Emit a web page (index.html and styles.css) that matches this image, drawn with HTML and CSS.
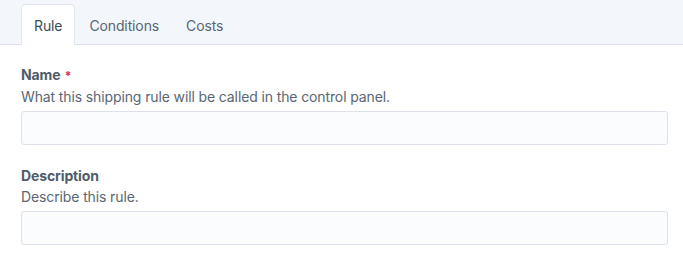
FILE: index.html
```html
<!DOCTYPE html>
<html>
<head>
<meta charset="utf-8">
<link rel="stylesheet" href="styles.css">
</head>
<body>
<div class="tabs">
  <div class="tab active">Rule</div>
  <div class="tab">Conditions</div>
  <div class="tab">Costs</div>
</div>
<div class="content">
  <div class="field">
    <div class="label">Name <span class="req">*</span></div>
    <div class="instr">What this shipping rule will be called in the control panel.</div>
    <div class="input"></div>
  </div>
  <div class="field">
    <div class="label">Description</div>
    <div class="instr">Describe this rule.</div>
    <div class="input"></div>
  </div>
</div>
</body>
</html>
```
FILE: styles.css
```css
* { box-sizing: border-box; }
body {
  margin: 0;
  font-family: Inter, "Liberation Sans", sans-serif;
  font-size: 14px;
  letter-spacing: -0.12px;
  color: #3f4d5a;
  background: #fff;
}
.tabs {
  display: flex;
  height: 45px;
  padding: 4px 0 0 21px;
  background: #f3f6fb;
  border-bottom: 1px solid #dde2ea;
}
.tab {
  height: 41px;
  padding: 0 12px;
  display: flex;
  align-items: center;
  color: #596673;
  border: 1px solid transparent;
  border-bottom: none;
  border-radius: 5px 5px 0 0;
  margin-right: 1px;
}
.tab.active {
  background: #fff;
  color: #3f4d5a;
  border-color: #e1e6ee;
  height: 41px;
  margin-bottom: -1px;
}
.content {
  padding: 20px 15px 0 21px;
}
.field { margin-bottom: 21px; }
.label {
  font-weight: 700;
  line-height: 20px;
  color: #4f5c69;
}
.req { color: #e12d39; font-size: 12px; margin-left: 1px; }
.instr {
  line-height: 22px;
  color: #596673;
  margin-bottom: 3px;
}
.input {
  height: 34px;
  background: #fbfcfe;
  border: 1px solid #dde2ea;
  border-radius: 3px;
}
```
